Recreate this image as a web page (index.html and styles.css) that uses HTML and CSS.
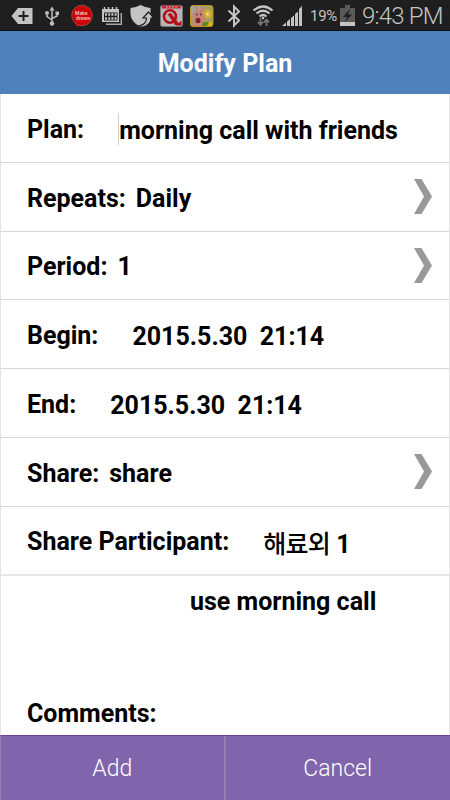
FILE: index.html
```html
<!DOCTYPE html>
<html lang="en">
<head>
    <meta charset="UTF-8">
    <title>Modify Plan</title>
    <link rel="stylesheet" href="styles.css">
</head>
<body>
<div class="status">
    <svg class="icons" width="306" height="31" viewBox="0 0 306 31">
        <!-- tag -->
        <path d="M11.5 16L18 8H32.500V24H18Z" fill="#c4c4c4"/>
        <path d="M23.500 11V21M18.500 16H28.500" stroke="#1f1f1f" stroke-width="2"/>
        <!-- usb -->
        <g fill="none" stroke="#bdbdbd" stroke-width="1.500">
            <path d="M52 9V23M47 13V16.500L52 20M57 13V16L52 18.500"/>
        </g>
        <path d="M49.500 10.500L52 6.500L54.500 10.500ZM55.500 11.500h3.500v3.500h-3.500Z" fill="#bdbdbd"/>
        <circle cx="47" cy="13" r="2" fill="#bdbdbd"/>
        <circle cx="52" cy="23.500" r="2.200" fill="#bdbdbd"/>
        <!-- make dream -->
        <path d="M75 22L76 26.500L82 25Z" fill="#c90000"/>
        <circle cx="82" cy="15.500" r="10.300" fill="#cc0202" stroke="#a05555" stroke-width=".8"/>
        <text x="75" y="14.500" class="dream">Make</text>
        <text x="76" y="20" class="dream">dream</text>
        <!-- calendar -->
        <path d="M106 24.200H121.300V13" fill="none" stroke="#a5a5a5" stroke-width="1.500"/>
        <path d="M102 9H119V22H102Z" fill="#c4c4c4"/>
        <path d="M104 12.500H117.500V20.500H104Z" fill="#1f1f1f"/>
        <path d="M105 14.500H117M105 18.500H117" stroke="#c4c4c4" stroke-width="2.500" stroke-dasharray="2 1.200"/>
        <path d="M104.500 7V10.500M108.500 7V10.500M112.500 7V10.500M116.500 7V10.500" stroke="#c4c4c4" stroke-width="1.500"/>
        <!-- shield -->
        <path d="M140.500 5Q145 7.500 150.500 8V14Q150 22 140.500 27Q131 22 130.500 14V8Q136 7.500 140.500 5Z" fill="#c4c4c4"/>
        <path d="M138 26Q146.500 25 146.500 18H143L148.500 12L154 18H151Q151 25 143 27Z" fill="#c4c4c4" stroke="#1f1f1f" stroke-width="1.200"/>
        <!-- Q -->
        <rect x="160.500" y="5.500" width="22" height="21" rx="2" fill="#b9b4b4" stroke="#777"/>
        <path d="M162 5.500H181V8.500H162Z" fill="#bd2935"/>
        <path d="M166 7H177" stroke="#d5aaaa" stroke-width="1" stroke-dasharray="2 1"/>
        <ellipse cx="170" cy="16.500" rx="6" ry="6.300" fill="none" stroke="#b40c18" stroke-width="2.600"/>
        <path d="M167.500 14L171 13L180 25H175Z" fill="#b40c18"/>
        <path d="M176 25.500H181.500V20.500Z" fill="#b40c18"/>
        <!-- game -->
        <rect x="190.500" y="5.500" width="22.500" height="21" rx="2.500" fill="#a99b62" stroke="#b99520"/>
        <path d="M191 6H203L199 16H191Z" fill="#9eaa94"/>
        <circle cx="207.500" cy="14" r="4.500" fill="#d2ab2c"/>
        <circle cx="207.500" cy="14" r="1.700" fill="#e5d68d"/>
        <path d="M193 26V16Q192 11 196 12L194.500 6H197L199 12L201 7H203V13Q206 16 204 26Z" fill="#cb8177"/>
        <ellipse cx="198" cy="20.500" rx="2.500" ry="2.800" fill="#76252b"/>
        <path d="M196 14.500h1.500M200 14.500h1.500" stroke="#333" stroke-width="1.300"/>
        <path d="M203 22H209V26H202Z" fill="#578d1d"/>
        <path d="M209 22H212V26H207Z" fill="#d3b51c"/>
        <!-- bluetooth -->
        <path d="M228.500 10.500L239 20.500L234 25.500V6.500L239 11.500L228.500 21.500" fill="none" stroke="#c4c4c4" stroke-width="2"/>
        <!-- wifi -->
        <g fill="none" stroke="#c4c4c4" stroke-width="2.200">
            <path d="M253.500 10.500Q263 2.500 272.500 10.500"/>
            <path d="M256.500 13.500Q263 8 269.500 13.500"/>
            <path d="M259.500 16.500Q263 13.500 266.500 16.500"/>
        </g>
        <circle cx="263" cy="18" r="1.300" fill="#c4c4c4"/>
        <path d="M260.500 18V25M257.800 21.800L260.500 25L263 21.800M266.500 26V19.500M263.800 22.500L266.500 19.500L269.200 22.500" fill="none" stroke="#777" stroke-width="1.700"/>
        <!-- signal -->
        <path d="M282 26L286 22.500V26ZM287 21.500L290 19V26H287ZM291 18L294 15.500V26H291ZM295 14L298 11.500V26H295ZM299 9L302 6V26H299Z" fill="#c4c4c4"/>
    </svg>
    <span class="percent">19%</span>
    <svg class="battery" width="15" height="21" viewBox="0 0 15 21">
        <path d="M5 0H10V3H15V21H0V3H5Z" fill="#595959"/>
        <path d="M0 17H15V21H0Z" fill="#c4c4c4"/>
        <path d="M10 4L3 12H7L5 17L12 9.500H8Z" fill="#1f1f1f"/>
    </svg>
    <span class="time">9:43 PM</span>
</div>
<h1 class="title">Modify Plan</h1>
<div class="form">
    <div class="row plan">
        <label>Plan:</label>
        <span class="input">morning call with friends</span>
    </div>
    <div class="row">
        <label>Repeats:</label>
        <span class="value">Daily</span>
        <svg class="arrow" width="18" height="35" viewBox="0 0 18 35"><path d="M0 0H7.500L18 17.500L7.500 35H0L10 17.500Z"/></svg>
    </div>
    <div class="row">
        <label>Period:</label>
        <span class="value">1</span>
        <svg class="arrow" width="18" height="35" viewBox="0 0 18 35"><path d="M0 0H7.500L18 17.500L7.500 35H0L10 17.500Z"/></svg>
    </div>
    <div class="row">
        <label>Begin:</label>
        <span class="date">2015.5.30&nbsp; 21:14</span>
    </div>
    <div class="row">
        <label>End:</label>
        <span class="date">2015.5.30&nbsp; 21:14</span>
    </div>
    <div class="row">
        <label>Share:</label>
        <span class="value">share</span>
        <svg class="arrow" width="18" height="35" viewBox="0 0 18 35"><path d="M0 0H7.500L18 17.500L7.500 35H0L10 17.500Z"/></svg>
    </div>
    <div class="row last">
        <label>Share Participant:</label>
        <span class="people"><span class="korean">해료외</span> 1</span>
    </div>
    <div class="comments">
        <p class="text">use morning call</p>
        <label>Comments:</label>
    </div>
</div>
<div class="btns">
    <a href="#">Add</a>
    <a href="#">Cancel</a>
</div>
</body>
</html>
```
FILE: styles.css
```css
*{
    margin: 0;
    padding: 0;
    box-sizing: border-box;
}
body{
    width: 450px;
    height: 800px;
    overflow: hidden;
    display: flex;
    flex-direction: column;
    background: #fff;
    font-family: Roboto, "Noto Sans CJK KR", sans-serif;
    color: #000;
}
.status{
    height: 31px;
    flex: none;
    display: flex;
    background: #1f1f1f;
    border-bottom: 1px solid #101018;
    color: #c4c4c4;
    white-space: nowrap;
}
.icons{
    flex: none;
}
.dream{
    font-size: 5px;
    font-weight: bold;
    fill: #f0b5b5;
}
.percent{
    width: 30px;
    margin-left: 4px;
    font-size: 15px;
    line-height: 33px;
    letter-spacing: -.3px;
}
.battery{
    margin-top: 5px;
    flex: none;
}
.time{
    margin-left: 7px;
    font-size: 24px;
    font-weight: 300;
    line-height: 32px;
    letter-spacing: -.8px;
}
.title{
    height: 63px;
    flex: none;
    background: #4f81bd;
    color: #fff;
    font-size: 25px;
    line-height: 66px;
    text-align: center;
}
.form{
    flex: 1;
    border: 1px solid #e3e3e3;
    border-width: 0 1px;
    font-size: 25px;
    font-weight: bold;
}
.row{
    height: 68.8px;
    padding: 3px 17px 0 26px;
    display: flex;
    align-items: center;
    border-bottom: 1px solid #d6d6d6;
    white-space: nowrap;
}
.row.last{
    border-bottom: 2px solid #e6e6e6;
}
.input{
    margin-left: 34px;
    height: 32px;
    line-height: 35px;
    border-left: 1px solid #d0d0d0;
}
.value{
    margin-left: 10px;
}
.arrow{
    margin-left: auto;
    margin-bottom: 3px;
    fill: #999;
}
.date{
    margin-left: 34px;
    padding-top: 2px;
}
.people{
    margin-left: 34px;
}
.korean{
    font-weight: 500;
    letter-spacing: -.7px;
}
.comments{
    padding: 11px 26px 0;
}
.text{
    margin: 0 0 82px 163px;
    line-height: 30px;
}
.comments label{
    line-height: 30px;
}
.btns{
    height: 65px;
    flex: none;
    display: flex;
    background: #8064ac;
    border-top: 1px solid #67449a;
    border-left: 1px solid #9482b6;
}
.btns a{
    width: 225px;
    color: #fff;
    font-size: 23px;
    font-weight: 300;
    line-height: 65px;
    text-align: center;
    text-decoration: none;
}
.btns a:first-child{
    border-right: 2px solid #9482b6;
}
```
